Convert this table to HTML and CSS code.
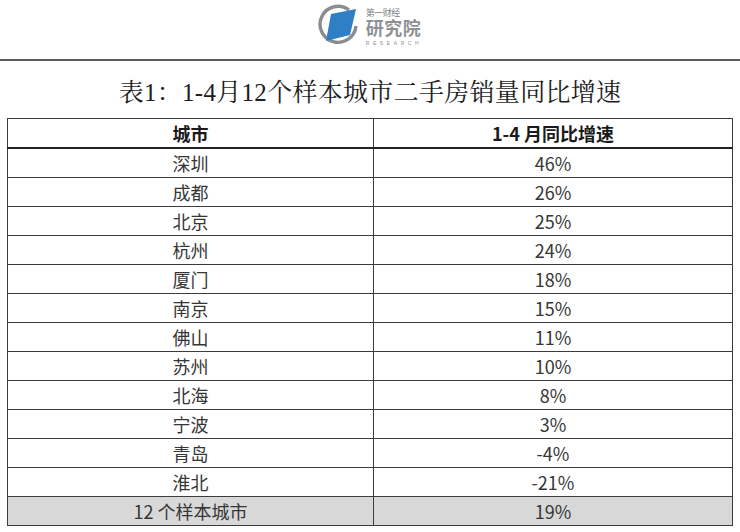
FILE: index.html
```html
<!DOCTYPE html>
<html lang="zh-CN">
<head>
<meta charset="utf-8">
<link rel="stylesheet" href="styles.css">
</head>
<body>
<header class="top">
  <div class="logo">
    <svg class="mark" width="42" height="44" viewBox="0 0 42 44">
      <path d="M31 8 A18 18 0 1 0 38 24" fill="none" stroke="#8a8d90" stroke-width="3.4"/>
      <polygon points="13,12 38,7 32,33 8,39" fill="#2f7fc6"/>
    </svg>
    <div class="brand">
      <span class="b-top">第一财经</span>
      <span class="b-main">研究院</span>
      <span class="b-sub">RESEARCH</span>
    </div>
  </div>
</header>
<h1 class="title">表1：1-4月12个样本城市二手房销量同比增速</h1>
<table class="data">
  <thead>
    <tr><th>城市</th><th>1-4 月同比增速</th></tr>
  </thead>
  <tbody>
    <tr><td>深圳</td><td>46%</td></tr>
    <tr><td>成都</td><td>26%</td></tr>
    <tr><td>北京</td><td>25%</td></tr>
    <tr><td>杭州</td><td>24%</td></tr>
    <tr><td>厦门</td><td>18%</td></tr>
    <tr><td>南京</td><td>15%</td></tr>
    <tr><td>佛山</td><td>11%</td></tr>
    <tr><td>苏州</td><td>10%</td></tr>
    <tr><td>北海</td><td>8%</td></tr>
    <tr><td>宁波</td><td>3%</td></tr>
    <tr><td>青岛</td><td>-4%</td></tr>
    <tr><td>淮北</td><td>-21%</td></tr>
    <tr class="total"><td>12 个样本城市</td><td>19%</td></tr>
  </tbody>
</table>
</body>
</html>
```

FILE: styles.css
```css
html, body {
  margin: 0;
  padding: 0;
  background: #ffffff;
}
body {
  width: 740px;
  height: 532px;
  overflow: hidden;
  font-family: "Noto Sans CJK SC", "Noto Sans", sans-serif;
  color: #2b2b2b;
}
.top {
  height: 61px;
  border-bottom: 2px solid #5a5a5a;
  display: flex;
  justify-content: center;
  align-items: flex-start;
  box-sizing: border-box;
}
.logo {
  display: flex;
  align-items: flex-start;
  gap: 6px;
  padding-top: 2px;
}
.mark {
  display: block;
}
.brand {
  display: flex;
  flex-direction: column;
  align-items: flex-start;
  padding-top: 6px;
  color: #8a8d90;
}
.b-top {
  font-size: 9px;
  line-height: 10px;
  letter-spacing: -0.5px;
  color: #7d8084;
}
.b-main {
  font-size: 18px;
  line-height: 19px;
  font-weight: 700;
  letter-spacing: 0.5px;
  color: #8e9194;
}
.b-sub {
  font-family: "Liberation Sans", sans-serif;
  font-size: 5px;
  line-height: 8px;
  margin-top: 2px;
  letter-spacing: 3.6px;
  color: #8e9194;
}
.title {
  margin: 0;
  height: 57px;
  display: flex;
  align-items: center;
  justify-content: center;
  font-family: "Liberation Serif", "Noto Serif CJK SC", "Noto Sans CJK SC", serif;
  font-weight: 400;
  font-size: 25px;
  color: #1e1e1e;
  letter-spacing: 0.3px;
}
.data {
  margin-left: 7px;
  width: 726px;
  border-collapse: collapse;
  table-layout: fixed;
  font-size: 18px;
}
.data th, .data td {
  border: 1px solid #3c3c3c;
  text-align: center;
  padding: 0;
  height: 28px;
  line-height: 20px;
}
.data td {
  color: #363636;
}
.data th:first-child, .data td:first-child {
  width: 365px;
}
.data th {
  font-weight: 700;
  color: #1a1a1a;
}
.data thead th {
  border-bottom: 2px solid #222;
}
.total td {
  background: #d8d8d8;
}
```
